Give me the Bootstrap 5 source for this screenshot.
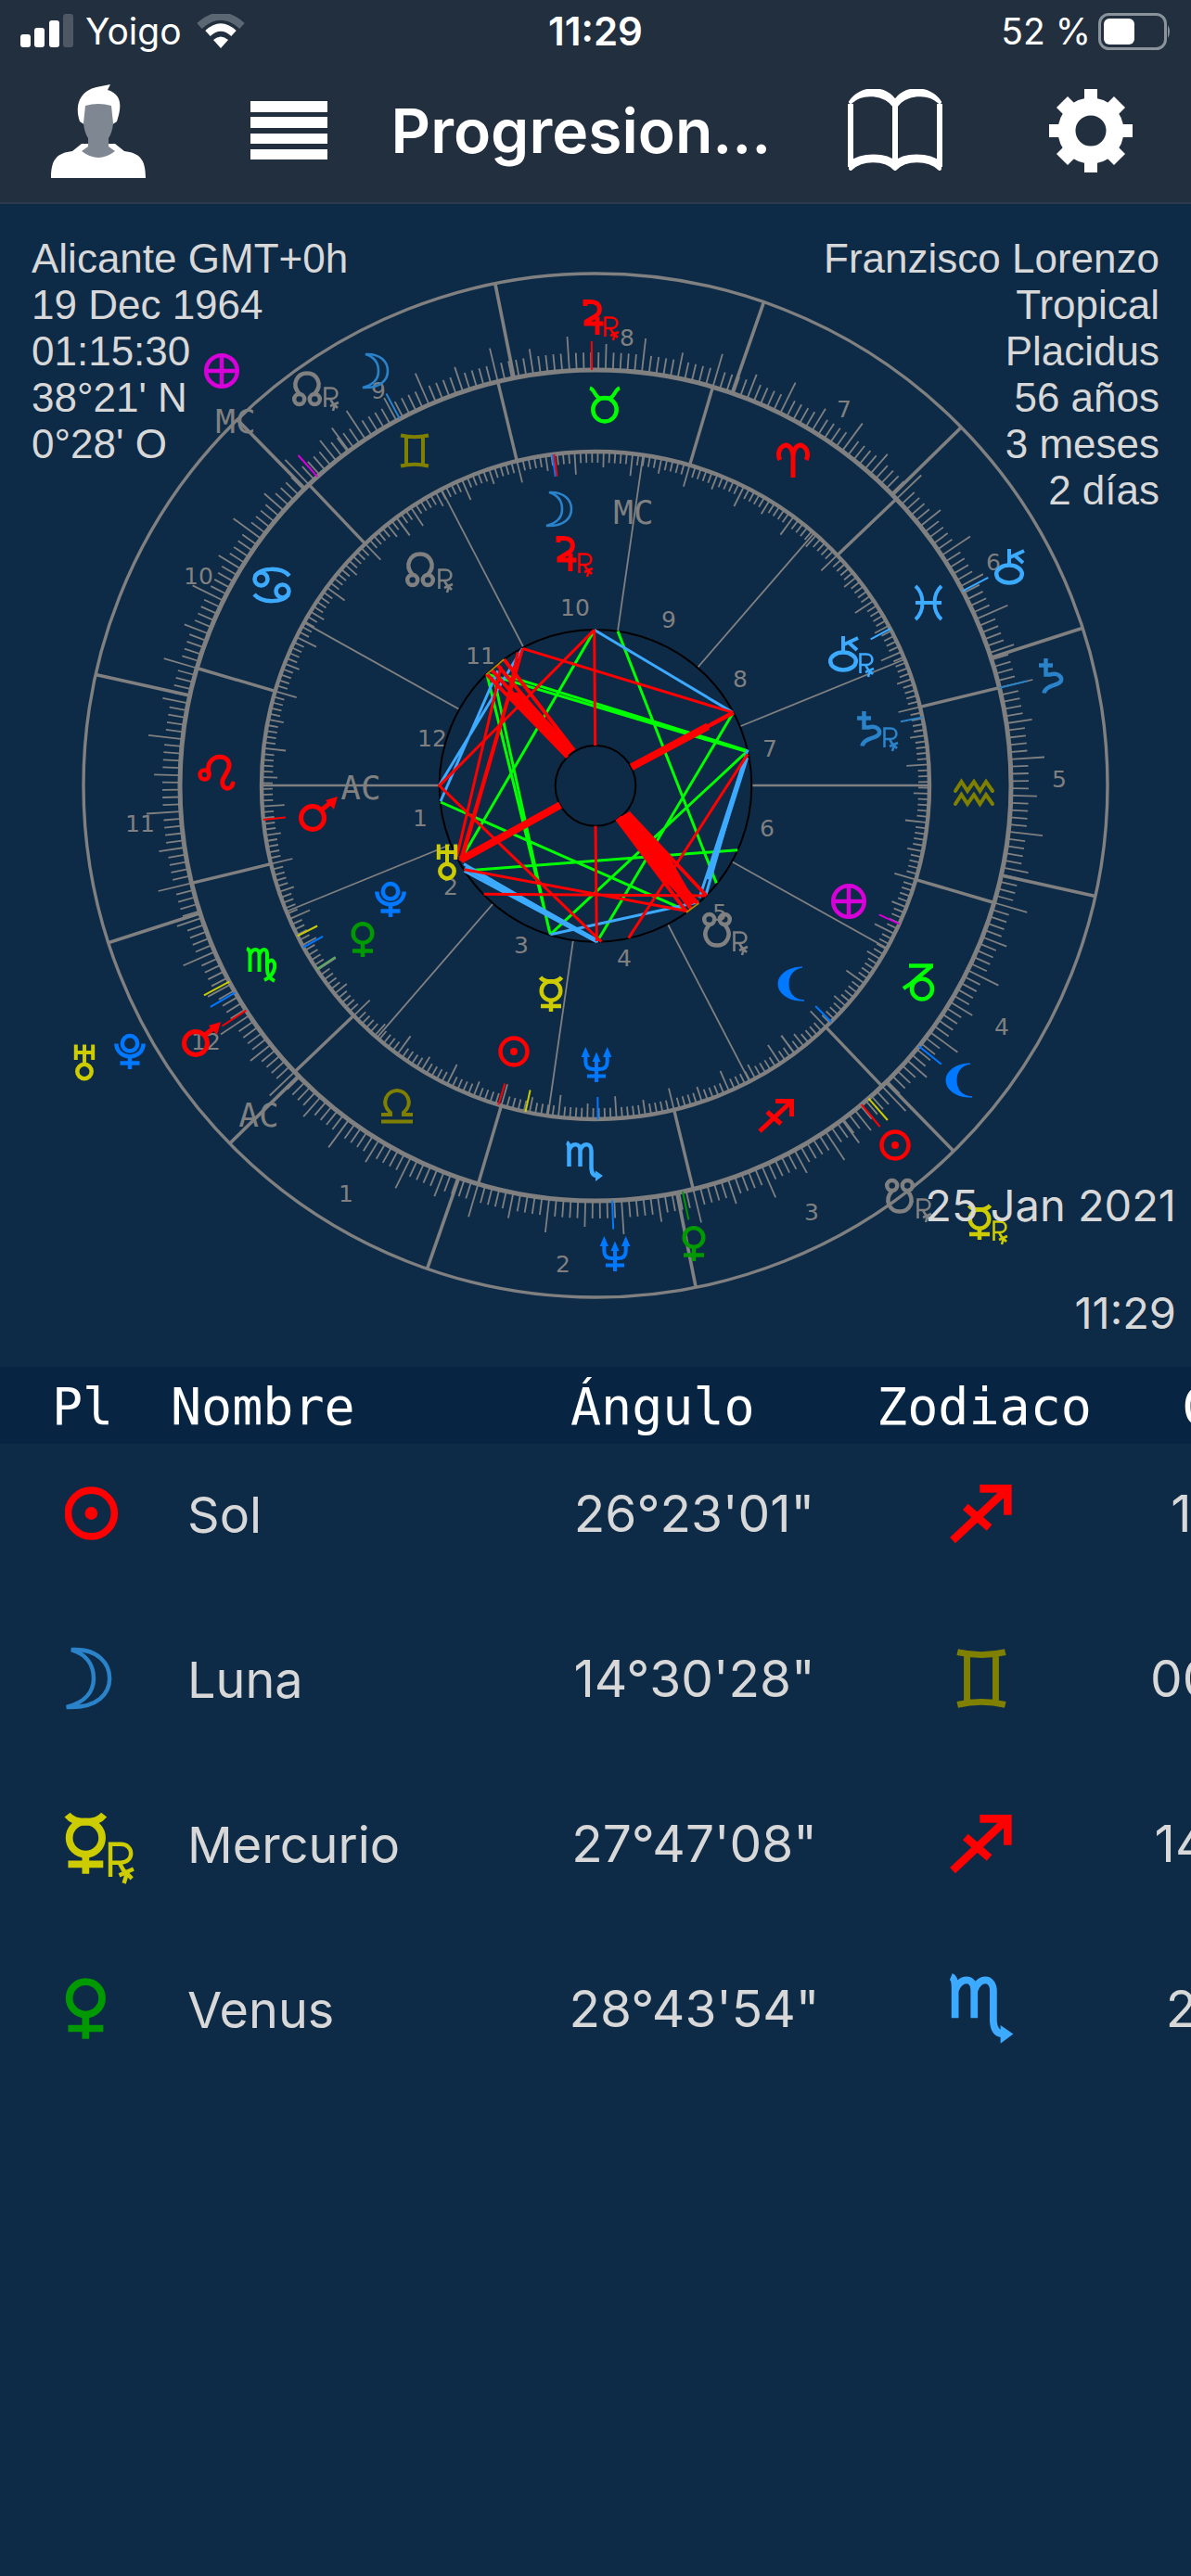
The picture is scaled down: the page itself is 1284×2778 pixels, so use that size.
<!DOCTYPE html>
<html lang="es">
<head>
<meta charset="utf-8">
<meta name="viewport" content="width=device-width, initial-scale=1">
<title>Progresiones</title>
<link href="https://cdn.jsdelivr.net/npm/bootstrap@5.3.0/dist/css/bootstrap.min.css" rel="stylesheet">
<style>
  body { background: #0d2a47; color: #d8d8d8; font-family: Inter, "Liberation Sans", sans-serif; }
  .app-head { background: #222f3f; border-bottom: 2px solid #2c3a4d; color: #fff; }
  .status-row { height: 68px; padding: 0 22px; font-size: 39px; line-height: 68px; }
  .status-row > div { flex: 1 1 0; }
  .status-time { font-size: 42px; }
  .tool-row { height: 150px; padding: 0 62px 4px 54px; }
  .tool-btn { background: none; border: 0; padding: 0; line-height: 0; color: #fff; }
  .tool-left { gap: 112px; }
  .tool-right { gap: 114px; }
  .app-title { font-size: 66px; line-height: 80px; font-weight: 600; padding-right: 14px; }
  .chart-note { font-family: "Liberation Sans", Arial, sans-serif; font-size: 44px; line-height: 50px; padding: 34px; }
  .chart-time { font-size: 47px; line-height: 56px; padding: 0 16px 30px; gap: 60px; }
  .house-no { font: 25px "DejaVu Sans", sans-serif; fill: #808080; text-anchor: middle; }
  .axis-label { font: 36px "DejaVu Sans Mono", monospace; fill: #808080; text-anchor: middle; }
  .glyph { fill: none; stroke: currentColor; stroke-width: 4.5; }
  .planet-table { table-layout: fixed; width: 1307px; margin: 0; }
  .planet-table th { background: #072543; color: #fff; font: 55px "DejaVu Sans Mono", monospace; line-height: 79px; height: 83px; padding: 4px 0 0; white-space: nowrap; }
  .planet-table td { height: 178px; padding: 0 0 28px; vertical-align: middle; white-space: nowrap; font-size: 55px; line-height: 62px; }
  .planet-table .name-cell { padding: 0 0 24px 18px; font-size: 54px; }
  .planet-table .icon-cell { padding-left: 70px; }
  .planet-table .sign-cell { padding-right: 6px; }
</style>
</head>
<body>
<svg width="0" height="0" class="position-absolute" aria-hidden="true">
  <defs>
    <g id="sun" class="glyph"><circle r="14.5"/><circle r="4" fill="currentColor" stroke="none"/></g>
    <g id="moon" class="glyph"><path stroke-width="2.6" d="M-11-18C6-19 13-9 13 0S6 19-14 18C-2 15 3 8 3 0S-1-15-11-18Z"/></g>
    <g id="lilith" class="glyph"><path fill="currentColor" stroke-width="1" d="M12-18C-3-18-14-10-14 0S-3 19 14 18C2 17-3 9-3 0S2-16 12-18Z"/></g>
    <g id="mercury" class="glyph"><circle cy="-3.5" r="10.3"/><path d="M-11.5-18Q-8-13.5 0-13.5T11.5-18M0 7V19M-11 13H11"/></g>
    <g id="venus" class="glyph"><circle cy="-6.5" r="10.3"/><path d="M0 4V19M-11 12.500H11"/></g>
    <g id="mars" class="glyph"><circle r="12.500" stroke-width="5"/><path stroke-width="5" d="M9-8L20-17"/><path fill="currentColor" stroke="none" d="M27-23L14-19L23-9Z"/></g>
    <g id="jupiter" class="glyph"><path stroke-width="5" d="M-9-12V-16.500H-3C9-16 8-5 2-1L-8 5V7H10.500M4 0V19"/></g>
    <g id="saturn" class="glyph"><path d="M-5.500-19V-1.500H-1C8-4 12 1 11 5C9 11-6 9-7.500 18.500M-13-11.500H2"/></g>
    <g id="uranus" class="glyph"><path stroke-width="4" d="M-9.200-19.500V-3M9.200-19.500V-3M0-19.500V2M-9-11H9"/><circle cy="9.500" r="7.700"/></g>
    <g id="neptune" class="glyph"><path stroke-width="4" d="M-11.700-11V-3Q-11.700 5-3 5H3Q11.700 5 11.700-3V-11M0-8V19M-10 12.500H10"/><path fill="currentColor" stroke="none" d="M-11.700-19L-7-8H-16.400ZM11.700-19L16.400-8H7ZM0-13.500L4.500-3H-4.500Z"/></g>
    <g id="pluto" class="glyph"><circle cy="-8.700" r="8.200"/><path d="M-14.700-8.500C-14 10 14 10 14.700-8.500M0 5V19M-10.500 12.500H10.500"/></g>
    <g id="chiron" class="glyph"><ellipse cy="8" rx="13.800" ry="9.500"/><path stroke-width="4" d="M0-19V-2M16-17L1-10M6-12L15-4"/></g>
    <g id="node" class="glyph"><path d="M-8 6C-18-5-10-16.500 0-16.500S18-5 8 6"/><circle cx="-8.300" cy="11.500" r="5.500"/><circle cx="8.300" cy="11.500" r="5.500"/></g>
    <g id="snode"><use href="#node" transform="rotate(180)"/></g>
    <g id="fortune" class="glyph"><circle r="16.800"/><path d="M-17 0H17M0-17V17"/></g>
    <g id="retro" class="glyph"><path stroke-width="2.600" d="M-6.500 9V-11.500H0C8.500-11.500 8.500 0 0 0H-6.500M-1 0L3.500 8L2 13M-1 8L8 4M1 4L7 10"/></g>
    <g id="taurus" class="glyph"><circle cy="4.800" r="12.700"/><path stroke-width="4" d="M-16-18.500C-11-17-10-8-5-7.500H5C10-8 11-17 16-18.500"/></g>
    <g id="aries" class="glyph"><path stroke-width="5" d="M-14 0C-21-12-3-26 0-5V19M0-5C3-26 21-12 14 0"/></g>
    <g id="pisces" class="glyph"><path stroke-width="4" d="M-14-18C-4-9-4 9-14 18M14-18C4-9 4 9 14 18M-14 0H14"/></g>
    <g id="aquarius" class="glyph"><path stroke-width="4" stroke-linecap="round" d="M-20-2L-13.500-12L-7-2L0-12L6.500-2L13-12L20-2M-20 12L-13.500 2L-7 12L0 2L6.500 12L13 2L20 12"/></g>
    <g id="capricorn" class="glyph"><circle cx="4" cy="8.500" r="11"/><path d="M-10-16.500H16M14-16L-7 2L-16 8"/></g>
    <g id="sagittarius" class="glyph"><path stroke-width="5" d="M-18 17L16-15M-1-15.500H16.500V1M-10-4L5 9"/></g>
    <g id="scorpio" class="glyph"><path d="M-19-20Q-16.500-19-16.500-13V6M-16.500-11C-14-20-4-20-4.500-11V6M-4.500-11C-2-20 7.500-20 7.500-11V8Q8 16 14 16"/><path fill="currentColor" stroke="none" d="M20 16L12 10.500V22Z"/></g>
    <g id="virgo" class="glyph"><path stroke-width="4" d="M-16-18Q-12.500-17-12.500-12V7M-12.500-11C-10-19-2.500-19-2.500-11V7M-2.500-11C0-19 6-19 6-11V4Q6 13 14 17M6-2C11-9 15-4 14 3Q12 12 3 16"/></g>
    <g id="libra" class="glyph"><path stroke-width="4" d="M-17 9H-7V7C-19-4-10-17 0-17S19-4 7 7V9H17M-17 16.500H17"/></g>
    <g id="leo" class="glyph"><circle cx="-12.500" cy="2.500" r="5"/><path stroke-width="5" stroke-linecap="round" d="M-8 1C-13-22 20-22 13-3L7 8C5 19 16 20 18 12"/></g>
    <g id="cancer" class="glyph"><circle cx="-11.500" cy="-6.500" r="7"/><path d="M-18-10C-12-19 10-20 19-10"/><circle cx="11.500" cy="6.500" r="7"/><path d="M18 10C12 19-10 20-19 10"/></g>
    <g id="gemini" class="glyph"><path stroke-width="4" d="M-15-16.500Q0-13 15-16.500M-15 16.500Q0 13 15 16.500M-9-15V15M9-15V15"/></g>
  </defs>
</svg>

<header class="app-head">
  <div class="status-row d-flex align-items-center">
    <div class="d-flex align-items-center">
      <svg width="58" height="38" viewBox="0 0 58 38" fill="#fff" aria-hidden="true"><rect y="22" width="11" height="14" rx="3"/><rect x="15" y="15" width="11" height="21" rx="3"/><rect x="31" y="7" width="11" height="29" rx="3"/><rect x="46" y="0" width="11" height="36" rx="3" opacity=".2"/></svg>
      <span class="ps-1 ms-2 me-3">Yoigo</span>
      <svg width="52" height="38" viewBox="0 0 52 38" fill="none" aria-hidden="true"><path d="M3 13Q26-8 49 13" stroke="#5b6874" stroke-width="8"/><path d="M12 21Q26 8 40 21" stroke="#fff" stroke-width="8"/><path d="M18 28Q26 21 34 28L26 37Z" fill="#fff"/></svg>
    </div>
    <div class="status-time text-center fw-semibold">11:29</div>
    <div class="d-flex align-items-center justify-content-end">
      <span class="me-2">52 %</span>
      <svg width="78" height="40" viewBox="0 0 78 40" aria-hidden="true"><rect x="1.500" y="1.500" width="71" height="37" rx="10" fill="none" stroke="#8a929b" stroke-width="3"/><rect x="6" y="6" width="33" height="28" rx="6" fill="#fff"/><path d="M75 13Q79 20 75 27Z" fill="#8a929b"/></svg>
    </div>
  </div>
  <div class="tool-row d-flex align-items-center">
    <div class="tool-left d-flex align-items-center">
      <button class="tool-btn" aria-label="Perfil">
        <svg width="104" height="104" viewBox="0 0 104 104"><path d="M1 103C1 82 8 76 24 74L34 66H70L80 74C96 76 103 82 103 103Z" fill="#fff"/><path d="M32 42C25 20 36 8 50 5L65 2L62 8C75 12 79 22 72 42L66 46H38Z" fill="#fff"/><path d="M38 25Q52 21 66 25L68 44Q67 54 63 60V69L70 74Q52 88 34 74L41 69V60Q37 54 36 44Z" fill="#7f8792"/></svg>
      </button>
      <button class="tool-btn" aria-label="Menú">
        <svg width="83" height="64" viewBox="0 0 83 64" fill="#fff"><path d="M0 0H83V12H0ZM0 17H83V29H0ZM0 35H83V46H0ZM0 52H83V63H0Z"/></svg>
      </button>
    </div>
    <h1 class="app-title flex-fill text-center text-truncate mb-0">Progresion...</h1>
    <div class="tool-right d-flex align-items-center">
      <button class="tool-btn" aria-label="Libro">
        <svg width="102" height="90" viewBox="0 0 102 90" fill="#fff" stroke="#fff" stroke-width="4" stroke-linejoin="round"><path fill="none" stroke-width="6" d="M3 16V84M51 16V84M99 16V84"/><path d="M3 14C14-3 42-3 51 14C60-3 88-3 99 14C86 2 62 4 51 19C40 4 16 2 3 14Z"/><path d="M3 80C14 70 42 70 51 80C60 70 88 70 99 80V86C86 74 62 75 51 86C40 75 16 74 3 86Z"/></svg>
      </button>
      <button class="tool-btn" aria-label="Ajustes">
        <svg width="92" height="92" viewBox="-46 -46 92 92" fill="none" stroke="#fff"><circle r="26" stroke-width="19"/><path stroke-width="14" d="M0-45V-30M0 45V30M-45 0H-30M45 0H30"/><path stroke-width="17" stroke-linejoin="round" d="M-31-31L-22-22M31-31L22-22M-31 31L-22 22M31 31L22 22"/></svg>
      </button>
    </div>
  </div>
</header>

<main>
  <section class="position-relative">
    <svg id="wheel" class="d-block w-100 h-auto" viewBox="0 220 1284 1254" role="img" aria-label="Carta de progresiones">
      <g fill="none" stroke="#808080">
        <circle cx="642" cy="847" r="552" stroke-width="3.4"/>
        <circle cx="642" cy="847" r="448" stroke-width="5"/>
        <circle cx="642" cy="847" r="360" stroke-width="4.4"/>
        <g id="scale"></g>
      </g>
      <g id="numbers"></g>
      <g transform="translate(430 640) scale(.33333)" fill="none" stroke-width="9">
        <g stroke="#000" stroke-width="6"><circle cx="636" cy="622" r="505"/><circle cx="636" cy="622" r="130"/></g>
        <path stroke="#0f0" d="M632 120L200 862M1080 388L648 1115M1125 512L490 1103M708 122L1027 937M1095 830L212 897M135 675L932 1027M290 262L1125 512M345 265L1125 508M285 262L490 1103M308 275L486 1090"/>
        <path stroke="#3caaff" d="M632 118L1080 385M400 178L131 620M320 250L135 672M1128 505L993 975M1124 520L972 985M210 875L645 1127M212 898L640 1127M490 1103L970 998"/>
        <path stroke="#3caaff" stroke-width="15" d="M215 885L640 1124M1124 530L1000 925"/>
        <path stroke="#f00" d="M632 118L635 492M632 118L131 622L655 1127M400 178L1080 385M400 180L372 280L205 860M330 235L310 330L188 850M385 190L350 345L198 865M1128 520L743 1115M636 752L640 1125M275 973L993 978M212 893L935 1028"/>
        <path stroke="#f00" stroke-width="12" d="M283 260L545 530M300 247L548 522M318 230L556 515M340 213L567 508M705 730L930 1030M715 722L945 1020M728 716L968 1005M742 708L995 978"/>
        <path stroke="#f00" stroke-width="24" d="M1000 430L752 562M200 862L522 685"/>
        <path stroke="#f00" stroke-width="14" d="M1082 385L990 435"/>
        <path fill="#f00" stroke="none" d="M350 325L395 318L568 505L538 530ZM705 730L742 708L880 860L960 1000L940 1010L830 900Z"/>
        <path stroke="#b08a00" stroke-width="5" d="M283 262L340 213M930 1032L970 1002"/>
      </g>
      <g id="glyphs"></g>
      <g class="axis-label"><text x="683" y="565">MC</text><text x="389" y="862">AC</text><text x="254" y="467">MC</text><text x="279" y="1215">AC</text></g>
    </svg>
    <div class="chart-note position-absolute top-0 start-0">Alicante GMT+0h<br>19 Dec 1964<br>01:15:30<br>38°21' N<br>0°28' O</div>
    <div class="chart-note position-absolute top-0 end-0 text-end">Franzisco Lorenzo<br>Tropical<br>Placidus<br>56 años<br>3 meses<br>2 días</div>
    <div class="chart-time position-absolute bottom-0 end-0 d-flex flex-column align-items-end"><span>25 Jan 2021</span><span>11:29</span></div>
  </section>

  <section class="overflow-hidden">
    <table class="planet-table">
      <colgroup><col style="width:184px"><col style="width:383px"><col style="width:363px"><col style="width:262px"><col style="width:115px"></colgroup>
      <thead>
        <tr><th class="ps-5"><span class="ps-2">Pl</span></th><th>Nombre</th><th class="ps-5">Ángulo</th><th class="text-center">Zodiaco</th><th class="text-end">C</th></tr>
      </thead>
      <tbody>
        <tr><td class="icon-cell"><svg width="86" height="76" viewBox="-16.500 -22 50 44" color="#f00"><use href="#sun"/></svg></td><td class="name-cell">Sol</td><td class="text-center">26°23'01"</td><td class="sign-cell text-center"><svg width="86" height="76" viewBox="-25 -22 50 44" color="#f00"><use href="#sagittarius"/></svg></td><td class="text-center ps-5">1</td></tr>
        <tr><td class="icon-cell"><svg width="86" height="76" viewBox="-15 -22 50 44" color="#2a82c9"><use href="#moon"/></svg></td><td class="name-cell">Luna</td><td class="text-center">14°30'28"</td><td class="sign-cell text-center"><svg width="86" height="76" viewBox="-25 -22 50 44" color="#808000"><use href="#gemini"/></svg></td><td class="text-center ps-5">00</td></tr>
        <tr><td class="icon-cell"><svg width="86" height="76" viewBox="-13 -22 50 44" color="#cc0" class="overflow-visible"><use href="#mercury"/><use href="#retro" x="22" y="12"/></svg></td><td class="name-cell">Mercurio</td><td class="text-center">27°47'08"</td><td class="sign-cell text-center"><svg width="86" height="76" viewBox="-25 -22 50 44" color="#f00"><use href="#sagittarius"/></svg></td><td class="text-center ps-5">14</td></tr>
        <tr><td class="icon-cell"><svg width="86" height="76" viewBox="-13 -22 50 44" color="#090"><use href="#venus"/></svg></td><td class="name-cell">Venus</td><td class="text-center">28°43'54"</td><td class="sign-cell text-center"><svg width="86" height="76" viewBox="-25 -22 50 44" color="#3caaff"><use href="#scorpio"/></svg></td><td class="text-center ps-5">2</td></tr>
      </tbody>
    </table>
  </section>
</main>

<script>
  const CX = 642, CY = 847, GREY = '#808080', SKY = '#3caaff', STEEL = '#2a82c9', BLUE = '#0078ff',
        RED = '#f00', LIME = '#0f0', OLIVE = '#808000', YELLOW = '#cc0', PINK = '#d800d8', GREEN = '#090';
  const point = (deg, r) => [CX + r * Math.cos(deg * Math.PI / 180), CY - r * Math.sin(deg * Math.PI / 180)].map(v => v.toFixed(1));
  const ray = (deg, r1, r2, width, color = GREY) =>
    `<path d="M${point(deg, r1)}L${point(deg, r2)}" stroke="${color}" stroke-width="${width}"/>`;
  let scale = '';

  // Degree marks on both rings; sign borders sit at 13.6 + 30k
  for (let d = 0; d < 360; d++) {
    const a = 13.6 + d;
    const step = d % 10 === 0 ? 2 : d % 5 === 0 ? 1 : 0;
    scale += ray(a, 360, [348, 343, 336][step], 1.8) + ray(a, 448, [467, 476, 485][step], 1.8);
    if (d % 30 === 0) scale += ray(a, 360, 448, 3.4);
  }
  // House cusps
  for (const a of [101.3, 70.8, 44.4, 17.9, 167.5, 134.4]) scale += ray(a, 448, 552, 3.6) + ray(a + 180, 448, 552, 3.6);
  for (const a of [22.2, 49.1, 81.8, 117.5, 150.8]) scale += ray(a, 168, 360, 1.8) + ray(a + 180, 168, 360, 1.8);
  scale += ray(0, 168, 360, 2.6) + ray(180, 168, 360, 2.6);
  // Planet marks
  for (const [a, c] of [[97.4, BLUE], [97.1, RED], [28, SKY], [11.8, STEEL], [-24.5, PINK], [-45.1, BLUE], [-89.6, BLUE], [-102.1, YELLOW], [-106.9, RED], [213.4, '#5fae5f'], [209, BLUE], [206.8, YELLOW], [185.9, RED], [126.6, GREY], [-53.4, GREY]])
    scale += ray(a, 360, 336, 2, c);
  for (const [a, c] of [[118.1, STEEL], [90.5, RED], [132, PINK], [27.9, SKY], [13.6, STEEL], [-38.9, BLUE], [-48.9, YELLOW], [-50.2, RED], [-77.9, GREEN], [-87.7, BLUE], [212.8, RED], [209.9, BLUE], [208.2, YELLOW], [126.4, GREY], [-53.6, GREY]])
    scale += ray(a, 448, 479, 2, c);
  document.getElementById('scale').innerHTML = scale;

  document.getElementById('numbers').innerHTML = [
    [10, 214, 621], [9, 408, 421], [8, 676, 364], [7, 910, 441], [6, 1071, 606], [5, 1142, 840], [4, 1080, 1107], [3, 875, 1307], [2, 607, 1363], [1, 373, 1287], [12, 222, 1123], [11, 151, 888],
    [10, 620, 655], [9, 721, 668], [8, 798, 732], [7, 830, 807], [6, 827, 893], [5, 776, 984], [4, 673, 1033], [3, 562, 1019], [2, 486, 956], [1, 453, 882], [12, 466, 796], [11, 518, 707]
  ].map(([n, x, y]) => `<text class="house-no" x="${x}" y="${y + 9}">${n}</text>`).join('');

  document.getElementById('glyphs').innerHTML = [
    ['taurus', 652, 437, LIME], ['aries', 855, 496, RED], ['pisces', 1001, 650, SKY], ['aquarius', 1050, 855, OLIVE], ['capricorn', 990, 1058, LIME], ['sagittarius', 837, 1203, RED],
    ['scorpio', 630, 1252, SKY], ['libra', 428, 1193, OLIVE], ['virgo', 282, 1041, LIME], ['leo', 233, 833, RED], ['cancer', 293, 631, SKY], ['gemini', 447, 486, OLIVE],
    ['moon', 603, 549, STEEL], ['jupiter', 611, 597, RED], ['retro', 631, 609, RED], ['chiron', 909, 705, SKY], ['retro', 934, 717, SKY], ['saturn', 937, 786, STEEL], ['retro', 960, 797, STEEL],
    ['fortune', 915, 972, PINK], ['lilith', 853, 1061, BLUE], ['neptune', 643, 1148, BLUE], ['sun', 554, 1134, RED], ['mercury', 594, 1072, YELLOW], ['venus', 391, 1013, GREEN], ['pluto', 421, 970, BLUE],
    ['mars', 337, 882, RED], ['uranus', 482, 930, YELLOW], ['node', 453, 614, GREY], ['retro', 480, 626, GREY], ['snode', 773, 1003, GREY], ['retro', 798, 1017, GREY],
    ['fortune', 239, 400, PINK], ['node', 331, 419, GREY], ['retro', 357, 430, GREY], ['moon', 405, 400, STEEL], ['jupiter', 640, 342, RED], ['retro', 659, 354, RED], ['chiron', 1088, 611, SKY],
    ['saturn', 1133, 729, STEEL], ['lilith', 1034, 1165, BLUE], ['sun', 965, 1235, RED], ['snode', 970, 1290, GREY], ['retro', 996, 1305, GREY], ['mercury', 1056, 1318, YELLOW], ['retro', 1078, 1329, YELLOW],
    ['venus', 748, 1341, GREEN], ['neptune', 663, 1352, BLUE], ['uranus', 91, 1146, YELLOW], ['pluto', 140, 1134, BLUE], ['mars', 211, 1125, RED]
  ].map(([id, x, y, c]) => `<use href="#${id}" x="${x}" y="${y}" color="${c}"/>`).join('');
</script>
<script src="https://cdn.jsdelivr.net/npm/bootstrap@5.3.0/dist/js/bootstrap.bundle.min.js"></script>
</body>
</html>
